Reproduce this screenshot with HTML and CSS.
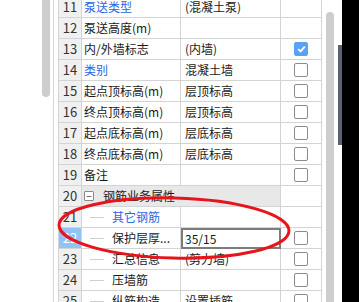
FILE: index.html
```html
<!DOCTYPE html>
<html lang="zh-CN">
<head>
	<meta charset="UTF-8">
	<title>属性列表</title>
	<link rel="stylesheet" href="styles.css">
</head>
<body>

	<div class="screen">
		<div class="side">
			<div class="side-thumb"></div>
			<div class="side-line"></div>
		</div>

		<div class="props">
			<div class="props-row">
				<div class="props-no">11</div>
				<div class="props-name blue">泵送类型</div>
				<div class="props-val">(混凝土泵)</div>
				<div class="props-chk"></div>
			</div>
			<div class="props-row">
				<div class="props-no">12</div>
				<div class="props-name">泵送高度(m)</div>
				<div class="props-val"></div>
				<div class="props-chk"></div>
			</div>
			<div class="props-row">
				<div class="props-no">13</div>
				<div class="props-name">内/外墙标志</div>
				<div class="props-val">(内墙)</div>
				<div class="props-chk"><span class="box checked">
					<svg width="9" height="8" viewBox="0 0 9 8"><path d="M1.2 4.2 L3.6 6.4 L7.8 1.6" fill="none" stroke="#fff" stroke-width="1.8"/></svg>
				</span></div>
			</div>
			<div class="props-row">
				<div class="props-no">14</div>
				<div class="props-name blue">类别</div>
				<div class="props-val">混凝土墙</div>
				<div class="props-chk"><span class="box"></span></div>
			</div>
			<div class="props-row">
				<div class="props-no">15</div>
				<div class="props-name">起点顶标高(m)</div>
				<div class="props-val">层顶标高</div>
				<div class="props-chk"><span class="box"></span></div>
			</div>
			<div class="props-row">
				<div class="props-no">16</div>
				<div class="props-name">终点顶标高(m)</div>
				<div class="props-val">层顶标高</div>
				<div class="props-chk"><span class="box"></span></div>
			</div>
			<div class="props-row">
				<div class="props-no">17</div>
				<div class="props-name">起点底标高(m)</div>
				<div class="props-val">层底标高</div>
				<div class="props-chk"><span class="box"></span></div>
			</div>
			<div class="props-row">
				<div class="props-no">18</div>
				<div class="props-name">终点底标高(m)</div>
				<div class="props-val">层底标高</div>
				<div class="props-chk"><span class="box"></span></div>
			</div>
			<div class="props-row">
				<div class="props-no">19</div>
				<div class="props-name">备注</div>
				<div class="props-val"></div>
				<div class="props-chk"><span class="box"></span></div>
			</div>
			<div class="props-row">
				<div class="props-no">20</div>
				<div class="props-group"><span class="toggle">−</span>钢筋业务属性</div>
				<div class="props-chk"></div>
			</div>
			<div class="props-row">
				<div class="props-no">21</div>
				<div class="props-name sub blue">其它钢筋</div>
				<div class="props-val"></div>
				<div class="props-chk"></div>
			</div>
			<div class="props-row">
				<div class="props-no selected">22</div>
				<div class="props-name sub">保护层厚...</div>
				<div class="props-val editing">35/15</div>
				<div class="props-chk"><span class="box"></span></div>
			</div>
			<div class="props-row">
				<div class="props-no">23</div>
				<div class="props-name sub">汇总信息</div>
				<div class="props-val">(剪力墙)</div>
				<div class="props-chk"><span class="box"></span></div>
			</div>
			<div class="props-row">
				<div class="props-no">24</div>
				<div class="props-name sub">压墙筋</div>
				<div class="props-val"></div>
				<div class="props-chk"><span class="box"></span></div>
			</div>
			<div class="props-row">
				<div class="props-no">25</div>
				<div class="props-name sub">纵筋构造</div>
				<div class="props-val">设置插筋</div>
				<div class="props-chk"><span class="box"></span></div>
			</div>
		</div>

		<div class="vscroll">
			<div class="vscroll-thumb"></div>
			<div class="vscroll-dark"></div>
		</div>
		<div class="blackout"></div>
	</div>

	<!-- 红色圈注 -->
	<svg class="mark" width="359" height="302" viewBox="0 0 359 302">
		<ellipse cx="174" cy="228" rx="115" ry="30" transform="rotate(1.5 174 228)" fill="none" stroke="#e8141c" stroke-width="3"/>
	</svg>

</body>
</html>
```

FILE: styles.css
```css
* {
	box-sizing: border-box;
}
html, body {
	margin: 0;
	padding: 0;
	background: #fff;
	overflow: hidden;
}
body {
	position: relative;
	width: 359px;
	height: 302px;
	font-family: "Noto Sans CJK SC", "Liberation Sans", sans-serif;
	font-size: 12px;
	color: #1a1a1a;
}

.screen {
	display: flex;
	height: 302px;
}

/* 左边的滚动条 */
.side {
	display: flex;
	width: 58px;
	flex: none;
}
.side-thumb {
	margin-left: 42px;
	width: 8px;
	height: 97px;
	background-color: #cdcdcd;
	border-radius: 0 0 4px 4px;
}
.side-line {
	margin-left: 3px;
	width: 1px;
	height: 100%;
	background-color: #d6d6d6;
}

/* 属性表 */
.props {
	width: 264px;
	flex: none;
	margin-top: -3px;
	border-left: 1px solid #d4d4d4;
}
.props-row {
	display: grid;
	grid-template-columns: 23px 99px 100px 41px;
	height: 21px;
}
.props-row > div {
	height: 21px;
	border-right: 1px solid #d4d4d4;
	border-bottom: 1px solid #d4d4d4;
	line-height: 20px;
	white-space: nowrap;
	overflow: hidden;
}
.props-no {
	background-color: #f0f0f0;
	color: #333;
	font-size: 13px;
	text-align: center;
}
.props-no.selected {
	background-color: #92c3f5;
	color: #fff;
}
.props-name {
	padding-left: 2px;
}
.props-name.sub {
	position: relative;
	padding-left: 30px;
}
.props-name.sub:before {
	content: "";
	position: absolute;
	left: 8px;
	top: 10px;
	width: 14px;
	height: 1px;
	background-color: #cfcfcf;
}
.props-val {
	padding-left: 4px;
}
.props-val.editing {
	border: 2px solid #7c7c7c !important;
	margin-top: 0;
	padding-left: 2px;
	line-height: 17px;
}
.blue {
	color: #2a66e0;
}

.props-group {
	grid-column: span 2;
	background-color: #e8e8e8;
	padding-left: 2px;
	display: flex;
	align-items: center;
}
.toggle {
	display: inline-block;
	width: 10px;
	height: 10px;
	margin-right: 9px;
	border: 1px solid #8a8a8a;
	border-radius: 1px;
	background: #fff;
	font-size: 10px;
	line-height: 7px;
	text-align: center;
	color: #444;
}

.props-chk {
	display: flex;
	align-items: center;
	justify-content: center;
}
.box {
	display: inline-flex;
	align-items: center;
	justify-content: center;
	width: 14px;
	height: 14px;
	border: 1px solid #8c8c8c;
	border-radius: 2px;
	background: #fff;
}
.box.checked {
	border-color: #5aa2f3;
	background-color: #5aa2f3;
}

/* 右边的滚动条 */
.vscroll {
	display: flex;
	width: 20px;
	flex: none;
}
.vscroll-thumb {
	margin-left: 4px;
	margin-top: 12px;
	width: 8px;
	background-color: #cdcdcd;
	border-radius: 4px 4px 0 0;
}
.vscroll-dark {
	margin-left: 4px;
	margin-top: 45px;
	width: 4px;
	height: 100px;
	background-color: #5a6371;
}
.blackout {
	flex: 1;
	background-color: #000;
}

.mark {
	position: absolute;
	left: 0;
	top: 0;
	pointer-events: none;
}
```
